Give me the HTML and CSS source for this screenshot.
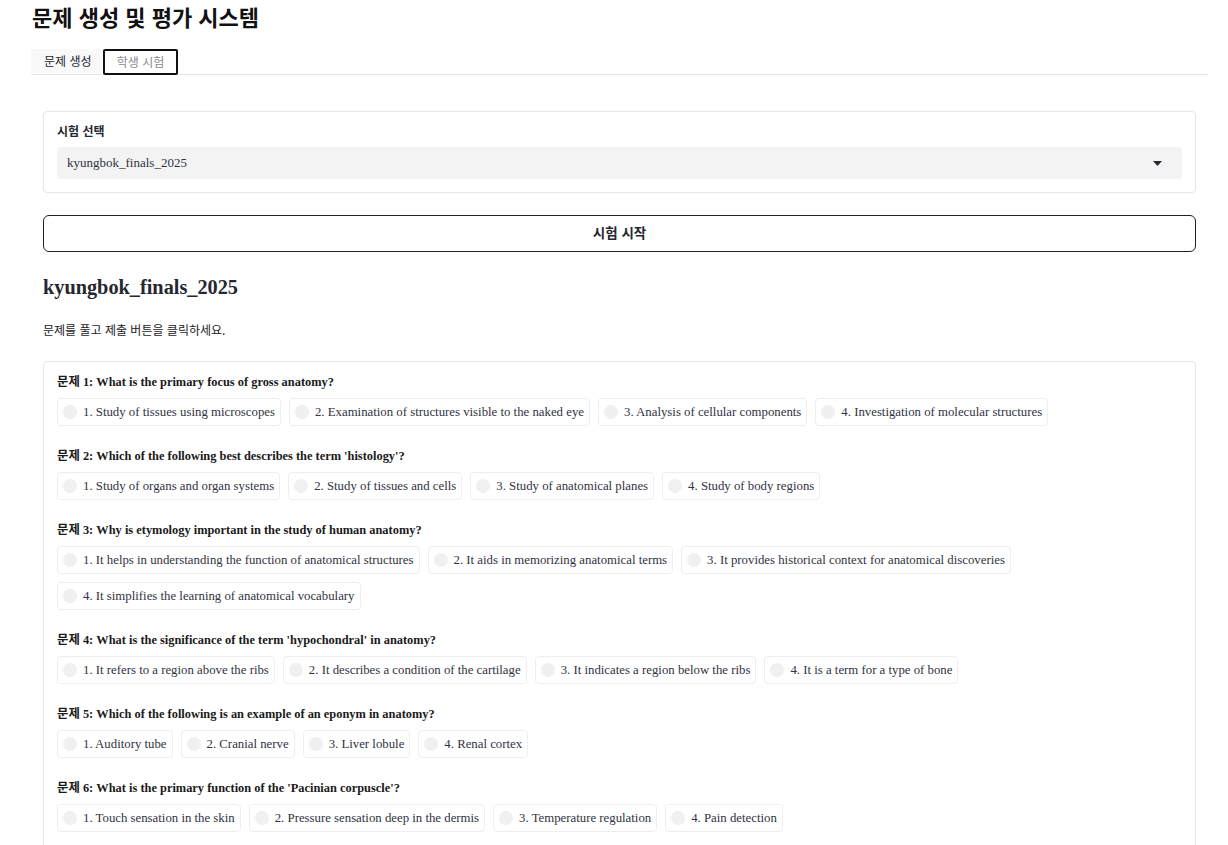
FILE: index.html
```html
<!DOCTYPE html>
<html lang="ko">
<head>
<meta charset="utf-8">
<link rel="stylesheet" href="styles.css">
</head>
<body>
<div class="page">
  <h1 class="title">문제 생성 및 평가 시스템</h1>
  <div class="tabs">
    <div class="tab tab-active">문제 생성</div>
    <div class="tab tab-focus">학생 시험</div>
  </div>
  <div class="panel">
    <div class="card select-card">
      <div class="label">시험 선택</div>
      <div class="select">
        <span>kyungbok_finals_2025</span>
        <svg class="caret" width="9" height="5" viewBox="0 0 9 5"><path d="M0 0h9L4.5 5z" fill="#262730"/></svg>
      </div>
    </div>
    <div class="start-btn">시험 시작</div>
    <h2 class="exam-title">kyungbok_finals_2025</h2>
    <p class="hint">문제를 풀고 제출 버튼을 클릭하세요.</p>
    <div class="card questions">
      <div class="question">
        <div class="q-title">문제 1: What is the primary focus of gross anatomy?</div>
        <div class="options">
          <div class="option"><span class="radio"></span>1. Study of tissues using microscopes</div>
          <div class="option"><span class="radio"></span>2. Examination of structures visible to the naked eye</div>
          <div class="option"><span class="radio"></span>3. Analysis of cellular components</div>
          <div class="option"><span class="radio"></span>4. Investigation of molecular structures</div>
        </div>
      </div>
      <div class="question">
        <div class="q-title">문제 2: Which of the following best describes the term 'histology'?</div>
        <div class="options">
          <div class="option"><span class="radio"></span>1. Study of organs and organ systems</div>
          <div class="option"><span class="radio"></span>2. Study of tissues and cells</div>
          <div class="option"><span class="radio"></span>3. Study of anatomical planes</div>
          <div class="option"><span class="radio"></span>4. Study of body regions</div>
        </div>
      </div>
      <div class="question">
        <div class="q-title">문제 3: Why is etymology important in the study of human anatomy?</div>
        <div class="options">
          <div class="option"><span class="radio"></span>1. It helps in understanding the function of anatomical structures</div>
          <div class="option"><span class="radio"></span>2. It aids in memorizing anatomical terms</div>
          <div class="option"><span class="radio"></span>3. It provides historical context for anatomical discoveries</div>
          <div class="option"><span class="radio"></span>4. It simplifies the learning of anatomical vocabulary</div>
        </div>
      </div>
      <div class="question">
        <div class="q-title">문제 4: What is the significance of the term 'hypochondral' in anatomy?</div>
        <div class="options">
          <div class="option"><span class="radio"></span>1. It refers to a region above the ribs</div>
          <div class="option"><span class="radio"></span>2. It describes a condition of the cartilage</div>
          <div class="option"><span class="radio"></span>3. It indicates a region below the ribs</div>
          <div class="option"><span class="radio"></span>4. It is a term for a type of bone</div>
        </div>
      </div>
      <div class="question">
        <div class="q-title">문제 5: Which of the following is an example of an eponym in anatomy?</div>
        <div class="options">
          <div class="option"><span class="radio"></span>1. Auditory tube</div>
          <div class="option"><span class="radio"></span>2. Cranial nerve</div>
          <div class="option"><span class="radio"></span>3. Liver lobule</div>
          <div class="option"><span class="radio"></span>4. Renal cortex</div>
        </div>
      </div>
      <div class="question">
        <div class="q-title">문제 6: What is the primary function of the 'Pacinian corpuscle'?</div>
        <div class="options">
          <div class="option"><span class="radio"></span>1. Touch sensation in the skin</div>
          <div class="option"><span class="radio"></span>2. Pressure sensation deep in the dermis</div>
          <div class="option"><span class="radio"></span>3. Temperature regulation</div>
          <div class="option"><span class="radio"></span>4. Pain detection</div>
        </div>
      </div>
    </div>
  </div>
</div>
</body>
</html>
```

FILE: styles.css
```css
html, body {
  margin: 0;
  padding: 0;
  background: #ffffff;
}
body {
  font-family: "Liberation Serif", "Noto Sans CJK KR", serif;
  color: #31333f;
  font-size: 13px;
}
.page {
  padding: 0 20px 0 31px;
}
.title {
  margin: 0;
  padding: 3px 0 0 1px;
  height: 45px;
  box-sizing: border-box;
  font-family: "Noto Sans CJK KR", sans-serif;
  font-size: 22px;
  line-height: 26px;
  font-weight: 700;
  color: #111111;
}
.tabs {
  display: flex;
  align-items: flex-start;
  border-bottom: 1px solid #e6e6e6;
  height: 25px;
  margin-top: 4px;
}
.tab {
  font-family: "Noto Sans CJK KR", sans-serif;
  font-size: 12px;
  height: 24px;
  line-height: 24px;
  box-sizing: border-box;
}
.tab-active {
  background: #f9f9f9;
  color: #262730;
  padding-left: 13px;
  width: 72px;
}
.tab-focus {
  height: 26px;
  line-height: 22px;
  border: 2px solid #111;
  border-radius: 2px;
  color: #8a8a8a;
  width: 75px;
  text-align: center;
}
.panel {
  padding: 36px 12px 0 12px;
}
.card {
  border: 1px solid #e6e6e6;
  border-radius: 4px;
}
.select-card {
  padding: 11px 13px 13px 13px;
}
.label {
  font-family: "Noto Sans CJK KR", sans-serif;
  font-size: 12px;
  font-weight: 700;
  line-height: 16px;
  margin-bottom: 8px;
  color: #262730;
}
.select {
  display: flex;
  align-items: center;
  justify-content: space-between;
  height: 32px;
  background: #f3f3f3;
  border-radius: 4px;
  padding: 0 20px 0 10px;
  font-size: 13px;
  color: #31333f;
}
.caret {
  display: block;
}
.start-btn {
  margin-top: 22px;
  height: 37px;
  box-sizing: border-box;
  border: 1px solid #222;
  border-radius: 6px;
  display: flex;
  align-items: center;
  justify-content: center;
  padding-bottom: 4px;
  font-family: "Noto Sans CJK KR", sans-serif;
  font-size: 13.5px;
  font-weight: 700;
  color: #262730;
}
.exam-title {
  margin: 22px 0 0 0;
  font-size: 20.3px;
  line-height: 26px;
  font-weight: 700;
  color: #262730;
}
.hint {
  margin: 22px 0 0 0;
  font-family: "Noto Sans CJK KR", sans-serif;
  font-size: 12px;
  line-height: 16px;
  color: #1a1a1a;
}
.questions {
  margin-top: 23px;
  padding: 12px 13px 0 13px;
}
.question {
  margin-bottom: 22px;
}
.q-title {
  font-weight: 700;
  font-size: 12.4px;
  line-height: 16px;
  color: #1a1a1a;
}
.options {
  display: flex;
  flex-wrap: wrap;
  gap: 8px 8px;
  margin-top: 8px;
}
.option {
  display: flex;
  align-items: center;
  gap: 6px;
  height: 28px;
  box-sizing: border-box;
  padding: 0 5px 0 5px;
  border: 1px solid #eeeeee;
  border-radius: 4px;
  font-size: 12.8px;
  color: #31333f;
  white-space: nowrap;
}
.radio {
  width: 14px;
  height: 14px;
  border-radius: 50%;
  background: #f0f0f0;
  flex: none;
}
```
